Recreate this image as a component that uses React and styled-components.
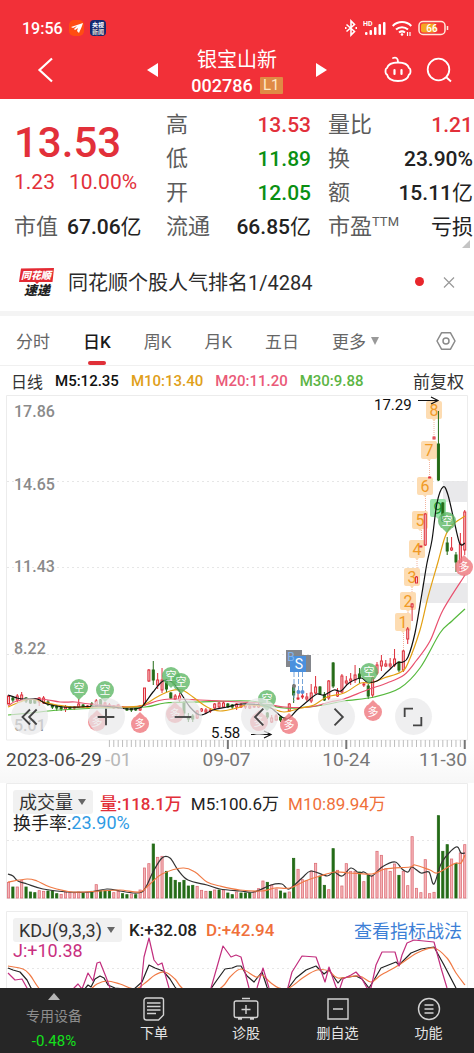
import React from 'react';
import styled, { createGlobalStyle } from 'styled-components';

const GlobalStyle = createGlobalStyle`
  * {
    box-sizing: border-box;
  }

  body {
    margin: 0;
    background: #fff;
    color: #222;
    font-family: Roboto, 'Noto Sans CJK SC', sans-serif;
  }

  button {
    padding: 0;
    border: 0;
    background: none;
    color: inherit;
    font-family: inherit;
    cursor: pointer;
  }

  svg {
    display: block;
  }
`;

const Page = styled.div`
  display: flex;
  flex-direction: column;
  min-height: 100vh;
`;

/* header */

const Header = styled.header`
  padding-top: 18px;
  height: 99px;
  background: #f23038;
  color: #fff;
`;

const StatusBar = styled.div`
  display: flex;
  align-items: center;
  height: 20px;
  padding: 0 25px 0 22px;
  gap: 6px;
`;

const Clock = styled.span`
  font-size: 16px;
  font-weight: 500;
`;

const StatusIcons = styled.div`
  display: flex;
  align-items: center;
  gap: 6px;
  margin-left: auto;
`;

const TitleBar = styled.div`
  display: grid;
  grid-template-columns: 1fr auto 1fr;
  align-items: center;
  height: 58px;
  margin-top: 3px;
  padding: 0 22px 0 36px;
`;

const TitleGroup = styled.div`
  display: flex;
  align-items: center;
  gap: 33px;
  margin-right: 14px;
`;

const TitleText = styled.div`
  display: flex;
  flex-direction: column;
  align-items: center;
  padding-top: 5px;
`;

const StockName = styled.h1`
  margin: 0;
  font-size: 20px;
  font-weight: 400;
  line-height: 26px;
`;

const StockCode = styled.div`
  display: flex;
  align-items: center;
  gap: 7px;
  font-size: 18px;
  font-weight: 500;
  line-height: 26px;
`;

const LevelBadge = styled.span`
  width: 23px;
  height: 17px;
  border-radius: 1px;
  background: #e08a45;
  color: #ffe9c8;
  font-size: 15px;
  font-weight: 400;
  line-height: 17px;
  text-align: center;
`;

const HeaderActions = styled.div`
  display: flex;
  justify-content: flex-end;
  gap: 14px;
`;

/* quote */

const Quote = styled.section`
  position: relative;
  display: grid;
  grid-template-columns: 135fr 145fr 145fr;
  grid-template-rows: repeat(4, 34px);
  column-gap: 17px;
  height: 151px;
  padding: 9px 1px 0 14px;
`;

const PriceBlock = styled.div`
  grid-row: 1 / 4;
  grid-column: 1;
  padding-top: 9px;
  color: #e2303a;
`;

const Price = styled.div`
  font-size: 42px;
  font-weight: 500;
  line-height: 52px;
`;

const Change = styled.div`
  display: flex;
  gap: 14px;
  font-size: 21px;
  line-height: 26px;
`;

const Stat = styled.div`
  display: flex;
  justify-content: ${(p) => (p.$col === 1 ? 'flex-start' : 'space-between')};
  gap: 9px;
  grid-column: ${(p) => p.$col};
  font-size: 21px;
  line-height: 34px;
  white-space: nowrap;
`;

const StatLabel = styled.span`
  color: #5c5c5c;
  font-size: 22px;
`;

const Ttm = styled.sup`
  font-size: 13px;
  line-height: 1;
`;

const StatValue = styled.span`
  color: ${(p) => p.$color || '#222'};
  font-weight: 500;
`;

const Unit = styled.span`
  font-weight: 400;
`;

const Corner = styled.span`
  position: absolute;
  right: 4px;
  bottom: 2px;
  border-left: 8px solid transparent;
  border-bottom: 8px solid #c4c4c4;
`;

/* news line */

const News = styled.section`
  display: flex;
  align-items: center;
  height: 66px;
  padding: 2px 18px 0 19px;
  border-bottom: 5px solid #f4f4f4;
`;

const NewsLink = styled.a`
  margin: 0 auto 0 13px;
  color: #2b2b2b;
  font-size: 20px;
  text-decoration: none;
`;

const Dot = styled.span`
  width: 9px;
  height: 9px;
  margin-right: 18px;
  border-radius: 50%;
  background: #e8262c;
`;

/* tabs */

const Tabs = styled.nav`
  display: flex;
  align-items: center;
  gap: 33px;
  height: 50px;
  padding: 0 18px 0 16px;
  border-bottom: 1px solid #f0f0f0;
`;

const Tab = styled.button`
  position: relative;
  display: flex;
  align-items: center;
  gap: 5px;
  height: 49px;
  color: ${(p) => (p.$active ? '#1a1a1a' : '#666')};
  font-size: 17px;
  font-weight: ${(p) => (p.$active ? 500 : 400)};

  &::after {
    content: '';
    display: ${(p) => (p.$active ? 'block' : 'none')};
    position: absolute;
    bottom: 0;
    left: 50%;
    width: 18px;
    height: 4px;
    margin-left: -9px;
    border-radius: 2px;
    background: #e03038;
  }
`;

const TabSettings = styled.button`
  margin-left: auto;
`;

const Caret = styled.span`
  border: 4px solid transparent;
  border-top: 8px solid #999;
  border-bottom: 0;
`;

/* charts */

const MaRow = styled.div`
  display: flex;
  gap: 12px;
  align-items: center;
  height: 29px;
  padding: 0 10px 0 11px;
  font-size: 15px;
  white-space: nowrap;
`;

const Period = styled.span`
  color: #333;
  font-size: 16px;
`;

const Ma = styled.span`
  color: ${(p) => p.$color};
  font-weight: ${(p) => (p.$plain ? 400 : 500)};
`;

const Adjust = styled.button`
  margin-left: auto;
  color: #333;
  font-size: 17px;
`;

const PriceChart = styled.section`
  position: relative;
`;

const ChartSvg = styled.svg`
  width: 100%;
  height: auto;
  font-family: Roboto, 'Noto Sans CJK SC', sans-serif;
`;

const ChartControls = styled.div`
  position: absolute;
  left: 0;
  right: 0;
  bottom: 14px;
  display: flex;
  justify-content: space-between;
  padding: 0 42px 0 11px;
`;

const RoundButton = styled.button`
  display: grid;
  place-items: center;
  width: 37px;
  height: 37px;
  border-radius: 50%;
  background: rgba(232, 232, 234, 0.7);
`;

const Dates = styled.div`
  display: grid;
  grid-template-columns: 197fr 120fr 97fr auto;
  height: 34px;
  padding: 0 7px 0 6px;
  background: linear-gradient(#fff, #f7f7f7);
  color: #777;
  font-size: 19px;
  line-height: 22px;
`;

const FirstDate = styled.span`
  color: #4a4a4a;
`;

const Faded = styled.span`
  margin-left: 3px;
  color: #b8b8b8;
`;

const Panel = styled.section`
  display: grid;
  margin-bottom: ${(p) => (p.$last ? 0 : 12)}px;

  & > * {
    grid-area: 1 / 1;
  }
`;

const Legend = styled.div`
  z-index: 1;
  padding: 7px 12px 0 13px;
  font-size: 17px;
  white-space: nowrap;
`;

const LegendRow = styled.div`
  display: flex;
  align-items: center;
  gap: ${(p) => p.$gap || 0}px;
  height: ${(p) => (p.$second ? 16 : 24)}px;
  font-size: ${(p) => (p.$second ? 18 : 17)}px;
`;

const Picker = styled.label`
  position: relative;
  display: flex;
  align-items: center;
  margin-right: -2px;
  border-radius: 3px;
  background: #f1f1f1;

  &::after {
    content: '';
    position: absolute;
    right: 7px;
    border: 4px solid transparent;
    border-top: 6px solid #666;
    border-bottom: 0;
    pointer-events: none;
  }
`;

const PickerSelect = styled.select`
  appearance: none;
  height: 24px;
  padding: 0 20px 0 6px;
  border: 0;
  background: none;
  color: #333;
  font-family: inherit;
  font-size: 18px;
`;

const TipLink = styled.a`
  margin-left: auto;
  color: #3d7fd6;
  font-size: 18px;
  text-decoration: none;
`;

/* bottom bar */

const BottomBar = styled.nav`
  display: grid;
  grid-template-columns: 108fr 92fr 92fr 91fr 91fr;
  flex: 1;
  min-height: 65px;
  background: #262626;
`;

const BarItem = styled.button`
  display: flex;
  flex-direction: column;
  align-items: center;
  padding-top: 9px;
  color: #e4e4e4;
  font-size: 14px;
  line-height: 24px;
`;

const DeviceItem = styled(BarItem)`
  padding-top: 5px;
  color: #8d8d8d;
`;

const Percent = styled.span`
  color: #14e01c;
  font-size: 15px;
  line-height: 26px;
`;

const UpArrow = styled.span`
  margin-bottom: 4px;
  border: 6px solid transparent;
  border-bottom: 7px solid #b5b5b5;
  border-top: 0;
`;

const STEP = 4.387;
const barX = (i) => 8.5 + i * STEP;

// r / g, high, body top, body bottom, low
const candles = `
r 301 301 309 309|g 301 303 305 307|r 299 301 305 307|r 297 300 305 306|g 302 303 306 308
g 303 304 308 309|g 304 305 308 309|r 302 303 307 311|r 301 303 308 309|g 305 307 309 311
g 309 310 312 314|g 310 311 313 316|g 310 312 314 316|r 310 312 314 317|g 311 312 314 315
r 311 312 313 315|r 304 309 312 313|g 309 310 312 313|r 310 311 312 313|g 307 309 312 314
r 304 306 311 312|g 304 305 310 311|r 307 308 311 312|r 308 310 312 313|r 310 311 313 314
r 309 310 313 314|r 311 312 313 314|g 312 313 315 316|g 312 313 315 317|g 312 313 315 316
r 310 312 315 316|r 293 293 310 311|r 274 275 286 287|g 266 275 285 290|r 278 285 290 294
r 273 285 295 298|g 284 286 294 297|g 297 298 303 304|r 299 301 304 305|r 298 301 305 308
g 306 308 318 322|g 318 322 324 327|g 319 321 324 327|r 315 316 323 324|r 313 314 316 317
r 313 315 317 319|r 313 315 316 318|r 308 309 313 315|r 307 308 312 313|r 306 308 312 313
g 308 309 312 313|g 309 310 312 314|r 308 309 312 315|r 308 310 312 313|r 310 311 312 314
r 310 311 313 314|r 309 311 312 313|r 308 310 312 313|r 308 309 311 312|g 317 318 322 324
r 320 323 327 328|r 319 321 325 326|g 321 322 325 327|g 322 323 325 326|r 308 309 316 317
g 289 292 300 308|r 295 303 304 305|r 296 301 302 304|r 298 302 304 306|r 289 298 306 308
r 281 292 298 299|g 291 292 299 300|g 297 300 305 306|r 285 286 303 305|g 267 268 291 293
r 293 297 301 302|r 279 281 297 298|r 281 286 288 291|r 278 284 286 290|r 270 280 285 288
g 273 279 283 288|r 287 289 290 292|g 289 291 301 304|r 281 283 300 303|r 267 270 278 280
r 260 266 271 276|r 265 269 271 272|r 263 269 271 273|r 254 264 270 272|g 266 267 275 277
r 255 256 275 277|r 232 234 244 249|r 208 209 212 226|r 181 182 188 188|r 151 151 152 152
r 118 119 150 151|r 82 82 83 83|r 42 42 44 44|g 16 49 85 86|g 107 108 126 127
g 142 148 156 160|r 142 153 155 156|g 157 160 167 177|r 138 149 168 177|r 115 117 155 160
`
  .trim()
  .split(/[|\n]/)
  .map((row) => {
    const [dir, ...v] = row.split(' ');
    return { dir, v: v.map(Number) };
  });

const volumes = `
47r 33g 33r 52r 33g 18g 16g 22r 20r 21g 21g 13g 11r 18r 16r 15r 18r 15g 16r 20g 40r 22g 22g 22g 16r
20r 13g 10g 12r 10g 24r 90r 103r 162g 122r 125r 80g 62g 53g 46g 53g 36g 38g 35r 23r 20r 20g 24r 24g
24r 15g 10g 18r 15g 15g 15g 20r 28r 51r 47g 39r 27r 21g 15g 18r 119g 86r 55r 52r 81r 104r 66g 38g
25r 148g 83r 36r 103r 80r 80r 78g 49r 68g 66r 140r 128r 88r 80r 102r 68g 80r 37r 184r 29r 16r 115r
13r 17r 247g 140g 160g 117r 103g 135r 160r
`
  .trim()
  .split(/\s+/)
  .map((s) => ({ h: parseInt(s, 10) / 3, dir: s.slice(-1) }));

const toPoints = (text) => text.trim().split(/\s+/).map((p) => p.split(',').map(Number));

// Catmull-Rom through the points
const curve = (text) => {
  const pts = toPoints(text);
  let d = `M${pts[0]}`;
  for (let i = 0; i < pts.length - 1; i += 1) {
    const a = pts[i - 1] || pts[i];
    const b = pts[i];
    const c = pts[i + 1];
    const e = pts[i + 2] || c;
    d += `C${b[0] + (c[0] - a[0]) / 6},${b[1] + (c[1] - a[1]) / 6} `;
    d += `${c[0] - (e[0] - b[0]) / 6},${c[1] - (e[1] - b[1]) / 6} ${c}`;
  }
  return d;
};

const priceLines = [
  {
    color: '#55b83c',
    points:
      '8,320 30,318 60,315 100,313 145,312 165,308 200,307 250,306 284,313 317,311 344,306 374,302 400,293 420,273 440,238 452,226 465,214',
  },
  {
    color: '#e9506e',
    points:
      '8,311 17,306 40,304 60,307 75,307 90,309 130,312 145,310 157,306 170,304 200,305 240,307 260,308 285,312 310,312 330,307 344,304 367,295 387,288 404,280 416,266 430,246 443,215 465,180',
  },
  {
    color: '#e3a012',
    points:
      '8,312 20,307 30,304 43,307 57,310 73,312 100,312 127,312 143,310 157,302 170,296 182,295 193,302 207,312 220,316 237,313 247,310 267,312 284,317 301,313 314,310 327,302 344,298 361,288 371,288 384,283 401,277 408,268 420,235 428,202 438,167 445,142 452,130 465,121',
  },
  {
    color: '#111',
    points:
      '8,300 17,303 23,304 37,304 47,309 63,312 80,312 97,311 113,312 128,314 140,313 145,308 153,297 163,286 172,287 180,297 190,312 200,320 213,315 227,312 241,309 261,310 271,313 286,324 297,315 309,305 317,299 324,300 334,295 341,296 349,288 361,283 367,287 377,286 387,277 397,268 403,267 408,262 415,238 422,198 427,168 432,145 437,108 443,92 448,100 455,130 460,149 465,148',
  },
];

const volumeLines = [
  {
    color: '#333',
    points:
      '8,91 13,93 18,98 27,101 43,106 67,109 90,109 107,106 120,108 133,110 142,109 147,102 153,89 162,75 170,75 178,87 188,97 207,102 220,106 240,108 254,109 271,102 282,101 289,106 302,95 311,88 327,93 334,89 342,93 351,85 359,90 364,89 372,93 382,84 395,79 402,86 408,89 412,84 421,90 429,89 434,101 442,79 456,64 461,70 465,70',
  },
  {
    color: '#f07a45',
    points:
      '8,99 27,96 37,98 50,104 73,109 100,108 120,107 140,109 150,101 162,91 183,85 195,89 207,99 220,103 240,107 262,108 275,105 290,105 305,98 320,93 335,89 350,90 372,91 385,86 410,84 415,82 430,87 437,90 450,83 456,80 461,80 465,72',
  },
];

const kLine =
  '8,57 13,59 20,61 27,69 31,77 45,92 70,90 83,80 88,74 91,76 95,68 100,65 104,67 108,74 115,77 133,79 142,71 149,54 155,57 163,60 170,68 175,76 190,95 210,79 217,69 225,58 232,57 237,55 241,55 247,65 254,71 262,61 267,76 272,88 287,79 296,67 306,59 316,55 324,63 329,59 338,72 342,67 356,65 362,68 369,77 374,69 381,57 396,51 399,54 411,42 421,38 434,36 444,54 456,77';
const dLine =
  '8,55 23,58 30,64 38,76 50,90 80,86 90,79 97,73 107,70 120,73 135,78 145,72 155,64 165,61 175,68 182,77 200,90 222,76 230,66 241,58 256,66 262,64 271,72 279,77 289,77 304,66 317,59 329,60 338,67 359,65 371,71 381,64 399,54 417,42 434,37 447,47 456,62 465,74';
const jLine =
  '8,62 15,69 22,68 27,77 40,100 70,90 74,77 78,73 82,78 88,62 93,70 97,52 100,51 106,66 110,77 118,95 135,95 141,76 144,46 149,27 154,49 158,54 162,52 169,77 180,104 200,104 211,77 223,35 231,46 236,44 241,46 249,77 253,84 257,77 263,57 269,77 278,100 287,80 292,61 302,45 316,46 325,71 329,56 336,76 339,80 343,68 351,64 356,61 362,68 367,77 371,77 376,54 382,41 395,41 399,55 402,44 407,32 414,29 434,31 441,57 447,77';

const signals = [
  ['空', 79, 293],
  ['空', 105, 295],
  ['空', 171, 281],
  ['空', 181, 287],
  ['空', 267, 304],
  ['空', 369, 277],
  ['空', 447, 126],
  ['多', 97, 327],
  ['多', 140, 329],
  ['多', 175, 319],
  ['多', 259, 327],
  ['多', 289, 330],
  ['多', 373, 317],
  ['多', 464, 172],
];

const counts = [
  [1, 403, 228],
  [2, 408, 207],
  [3, 412, 183],
  [4, 417, 155],
  [5, 420, 126],
  [6, 425, 92],
  [7, 429, 56],
  [8, 434, 16],
  [9, 438, 114],
];

const axisLabels = [
  ['17.86', 16],
  ['14.65', 89],
  ['11.43', 171],
  ['8.22', 253],
  ['5.01', 330],
];

const stats = [
  { col: 2, label: '高', value: '13.53', color: '#e2303a' },
  { col: 3, label: '量比', value: '1.21', color: '#e2303a' },
  { col: 2, label: '低', value: '11.89', color: '#0a8f12' },
  { col: 3, label: '换', value: '23.90%' },
  { col: 2, label: '开', value: '12.05', color: '#0a8f12' },
  { col: 3, label: '额', value: '15.11', unit: '亿' },
  { col: 1, label: '市值', value: '67.06', unit: '亿' },
  { col: 2, label: '流通', value: '66.85', unit: '亿' },
  { col: 3, label: '市盈', ttm: true, unit: '亏损' },
];

const tabs = ['分时', '日K', '周K', '月K', '五日', '更多'];

const controls = [
  ['最早', 'M20 3 11 12l9 9M12 3 3 12l9 9'],
  ['放大', 'M12 2v20M2 12h20'],
  ['缩小', 'M2 12h20'],
  ['向左', 'M16 2 6 12l10 10'],
  ['向右', 'M9 2l10 10L9 22'],
  ['全屏', 'M2 12V2h10M22 12v10H12'],
];

const StatusBadges = () => (
  <svg width="38" height="18" viewBox="0 0 38 18">
    <rect x="0" y="1" width="15" height="16" rx="5" fill="#ff4d12" />
    <path d="M2 8c4-1 8-3 12-4-1 4-3 7-4 10l-2-2 1-3-3 2-1-1 3-3-4 2z" fill="#fff" />
    <rect x="21" y="1" width="16" height="16" rx="4" fill="#132a70" />
    <text x="29" y="8" fontSize="6" fontWeight="700" fill="#fff" textAnchor="middle">
      央视
    </text>
    <text x="29" y="15" fontSize="6" fontWeight="700" fill="#e8dccf" textAnchor="middle">
      新闻
    </text>
  </svg>
);

const Bluetooth = () => (
  <svg width="12" height="18" viewBox="0 0 12 18" fill="none" stroke="#fff" strokeWidth="1.600">
    <path d="M1.500 5.500 9.500 12.500 6 16V2l3.500 3.500-8 7" />
    <path d="M0 9h1.500M10.500 9H12" strokeWidth="2" />
  </svg>
);

const Signal = () => (
  <svg width="23" height="18" viewBox="0 0 23 18" fill="#fff">
    <text x="0" y="7" fontSize="7" fontWeight="700">
      HD
    </text>
    <rect x="2" y="13" width="2.500" height="3" rx="1" />
    <rect x="6.500" y="11" width="2.500" height="5" rx="1" />
    <rect x="11" y="8" width="2.500" height="8" rx="1" />
    <rect x="15.500" y="5" width="2.500" height="11" rx="1" />
    <rect x="20" y="3" width="2.500" height="13" rx="1" />
  </svg>
);

const Wifi = () => (
  <svg width="20" height="18" viewBox="0 0 20 18" fill="none" stroke="#fff" strokeWidth="2">
    <path d="M.7 7a13 13 0 0 1 18.600 0M4 10.500a9 9 0 0 1 12 0M7 13.500a5 5 0 0 1 6 0" />
    <circle cx="10" cy="15.500" r="1.300" fill="#fff" stroke="none" />
    <path d="M15.500 13v4M18 13v4" strokeWidth="1.200" />
  </svg>
);

const Battery = () => (
  <svg width="31" height="16" viewBox="0 0 31 16">
    <rect x="1" y="1.500" width="26" height="13" rx="4" fill="none" stroke="#ffe9dc" strokeWidth="1.500" />
    <rect x="3" y="3.500" width="15" height="9" rx="2" fill="#f5a623" />
    <path d="M29.500 6v4" stroke="#ffe9dc" strokeWidth="1.500" />
    <text x="14" y="11.500" fontSize="10" fontWeight="500" fill="#fff" textAnchor="middle">
      66
    </text>
  </svg>
);

const Robot = () => (
  <svg width="28" height="28" viewBox="0 0 28 28" fill="none" stroke="#fff" strokeWidth="1.800" strokeLinecap="round">
    <path d="M9 2c3-1 5 0 5 4" />
    <path d="M14 6.500c-7 0-10 2-11 5.500-2 .5-2 6 0 6.500 1 4.500 4 6.500 11 6.500s10-2 11-6.500c2-.5 2-6 0-6.500-1-3.500-4-5.500-11-5.500z" />
    <path d="M10.500 14v4M17.500 14v4" strokeWidth="2.200" />
  </svg>
);

const NewsLogo = () => (
  <svg width="36" height="30" viewBox="0 0 36 30" role="img" aria-label="同花顺速递">
    <path d="M2 1.500 35 1 33.500 15H20l-2 2-2-2H0z" fill="#e42a33" />
    <g fontStyle="italic" fontWeight="900" textAnchor="middle">
      <text x="17" y="12" fontSize="10" fill="#fff">
        同花顺
      </text>
      <text x="18" y="28" fontSize="13" fill="#222">
        速递
      </text>
    </g>
  </svg>
);

const barIcons = [
  {
    label: '下单',
    icon: <path d="M4.500 1h15a2 2 0 0 1 2 2v15l-5 5h-12A2.500 2.500 0 0 1 2 20.500v-17A2.500 2.500 0 0 1 4.500 1zM5 6h13.500M5 9.500h13.500M5 13h13.500M5 16.500h9" />,
  },
  {
    label: '诊股',
    icon: <path d="M2 4h20a1.800 1.800 0 0 1 1.800 1.800v13A1.800 1.800 0 0 1 22 20.500H2a1.800 1.800 0 0 1-1.800-1.700v-13A1.800 1.800 0 0 1 2 4zM8 1.500h8M12 8v9M7.500 12.500h9M4 22h4M16 22h4" />,
  },
  { label: '删自选', icon: <path d="M2 2h20v20H2zM7 12h10" /> },
  {
    label: '功能',
    icon: (
      <>
        <circle cx="12" cy="12" r="10.500" />
        <path d="M7.500 8h9M7.500 12h9M7.500 16h9" />
      </>
    ),
  },
];

const Lines = ({ lines }) =>
  lines.map((line) => (
    <path key={line.color} d={curve(line.points)} fill="none" stroke={line.color} strokeWidth="1.200" />
  ));

const KLine = () => (
  <ChartSvg viewBox="0 0 474 354">
    <g fill="#e9e9eb">
      <rect x="443" y="86" width="24" height="21" />
      <rect x="417" y="178" width="50" height="3" />
      <rect x="422" y="188" width="45" height="20" />
    </g>
    <path d="M6.500 345V.5h461V345z" fill="none" stroke="#ececec" />
    <path d="M7 86.500h460M7 172.500h460M7 259.500h460" stroke="#e6e6e6" strokeDasharray="2 3" />
    <g fill="#8a8a8a" fontSize="16" fontWeight="500">
      {axisLabels.map(([label, y]) => (
        <text key={label} x="14" y={y + 6}>
          {label}
        </text>
      ))}
    </g>

    <path
      d="M403.500 238v18M408 215v20M412 192v16M417 164v17M421.500 135v17M425.500 101v18M429.500 65v17M434 25v18"
      stroke="#f3b5a0"
      strokeDasharray="1 1"
    />
    {counts.map(([n, x, y]) => (
      <g key={n}>
        <path
          d={`M${x - 6} ${y - 10}h12a2 2 0 0 1 2 2v14a2 2 0 0 1-2 2h-4l-2 2-2-2h-4a2 2 0 0 1-2-2v-14a2 2 0 0 1 2-2z`}
          fill={n === 9 ? '#98e3a8' : '#fddcb2'}
        />
        <text x={x} y={y + 5} fontSize="16" textAnchor="middle" fill={n === 9 ? '#14982f' : '#f09a26'}>
          {n}
        </text>
      </g>
    ))}

    {candles.map(({ dir, v }, i) => {
      const color = dir === 'r' ? '#dd2f3a' : '#246b17';
      return (
        <g key={i} stroke={color}>
          <path d={`M${barX(i)} ${v[0]}V${v[1]}M${barX(i)} ${v[2]}V${v[3]}`} />
          <rect x={barX(i) - 1} y={v[1]} width="2" height={v[2] - v[1]} fill={dir === 'r' ? '#f8c6ca' : color} />
        </g>
      );
    })}

    <Lines lines={priceLines} />

    {signals.map(([mark, x, y]) => (
      <g key={`${x}-${y}`} opacity="0.8">
        <circle cx={x} cy={y} r="9" fill={mark === '空' ? '#5fb867' : '#f0787e'} />
        <path
          d={mark === '空' ? `M${x - 4} ${y + 8}h8l-4 4z` : `M${x - 4} ${y - 8}h8l-4-4z`}
          fill={mark === '空' ? '#5fb867' : '#f0787e'}
        />
        <text x={x} y={y + 4} fontSize="11" textAnchor="middle" fill="#fff">
          {mark}
        </text>
      </g>
    ))}

    <path d="M294 277v29M298.500 277v20M302.500 277v20" stroke="#74a3d8" strokeDasharray="5 2" />
    <circle cx="298.500" cy="297" r="2" fill="#5a94d6" />
    <circle cx="302.500" cy="297" r="2" fill="#5a94d6" />
    <circle cx="294" cy="291" r="2" fill="#777" />
    <rect x="286" y="255" width="16" height="17" fill="#83868c" />
    <rect x="297" y="260" width="14" height="17" fill="#83868c" />
    <rect x="290" y="261" width="16" height="16" fill="#4a90de" />
    <text x="291" y="266" fontSize="12" textAnchor="middle" fill="#7db4f0">
      B
    </text>
    <text x="299" y="274" fontSize="14" textAnchor="middle" fill="#fff">
      S
    </text>

    <g fill="#111" fontSize="15">
      <text x="374" y="15">
        17.29
      </text>
      <text x="211" y="343">
        5.58
      </text>
    </g>
    <path d="M418 5.500h20M431 2l7 3.500-7 3.500M251 339.500h20M264 336l7 3.500-7 3.500" fill="none" stroke="#111" strokeWidth="1.200" />

    {candles.slice(23).map((c, i) => {
      const x = barX(i + 23);
      const major = [50, 77, 104].includes(i + 23);
      return (
        <path key={x} d={`M${x} 345v${major ? 9 : 7}`} stroke={major ? '#777' : '#bdbdbd'} strokeWidth={major ? 2 : 1} />
      );
    })}
  </ChartSvg>
);

const VolumeChart = () => (
  <ChartSvg viewBox="0 0 474 116">
    <path d="M6.500.5h461v115H6.500z" fill="none" stroke="#ececec" />
    <path d="M7 57.500h460" stroke="#e6e6e6" strokeDasharray="2 3" />
    {volumes.map(({ h, dir }, i) => (
      <rect
        key={i}
        x={barX(i) - 1.1}
        y={115 - h}
        width="2.200"
        height={h}
        fill={dir === 'r' ? '#f5b4b8' : '#246b17'}
        stroke={dir === 'r' ? '#dd7078' : '#246b17'}
        strokeWidth="0.800"
      />
    ))}
    <Lines lines={volumeLines} />
  </ChartSvg>
);

const KdjChart = () => (
  <ChartSvg viewBox="0 0 474 77">
    <path d="M6.500 78V.5h461V78" fill="none" stroke="#ececec" />
    <path d="M7 57.500h460" stroke="#e6e6e6" strokeDasharray="2 3" />
    <g fill="none" strokeWidth="1.200" strokeLinejoin="round">
      <polyline points={kLine} stroke="#222" />
      <path d={curve(dLine)} stroke="#f07a45" />
      <polyline points={jLine} stroke="#c22e7e" />
    </g>
  </ChartSvg>
);

const App = () => (
  <>
    <GlobalStyle />
    <Page>
      <Header>
        <StatusBar>
          <Clock>19:56</Clock>
          <StatusBadges />
          <StatusIcons>
            <Bluetooth />
            <Signal />
            <Wifi />
            <Battery />
          </StatusIcons>
        </StatusBar>
        <TitleBar>
          <button type="button" aria-label="返回">
            <svg width="20" height="26" viewBox="0 0 20 26" fill="none" stroke="#fff" strokeWidth="2.200">
              <path d="M16 1.500 3.500 13 16 24.500" />
            </svg>
          </button>
          <TitleGroup>
            <button type="button" aria-label="上一只">
              <svg width="11" height="14" viewBox="0 0 11 14" fill="#fff">
                <path d="M11 0v14L0 7z" />
              </svg>
            </button>
            <TitleText>
              <StockName>银宝山新</StockName>
              <StockCode>
                002786
                <LevelBadge>L1</LevelBadge>
              </StockCode>
            </TitleText>
            <button type="button" aria-label="下一只">
              <svg width="11" height="14" viewBox="0 0 11 14" fill="#fff">
                <path d="M0 0v14l11-7z" />
              </svg>
            </button>
          </TitleGroup>
          <HeaderActions>
            <button type="button" aria-label="助手">
              <Robot />
            </button>
            <button type="button" aria-label="搜索">
              <svg width="26" height="26" viewBox="0 0 26 26" fill="none" stroke="#fff" strokeWidth="1.800">
                <circle cx="12.500" cy="12.500" r="10.800" />
                <path d="M20 20l5 4.500" />
              </svg>
            </button>
          </HeaderActions>
        </TitleBar>
      </Header>

      <Quote>
        <PriceBlock>
          <Price>13.53</Price>
          <Change>
            <span>1.23</span>
            <span>10.00%</span>
          </Change>
        </PriceBlock>
        {stats.map((s) => (
          <Stat key={s.label} $col={s.col}>
            <StatLabel>
              {s.label}
              {s.ttm && <Ttm>TTM</Ttm>}
            </StatLabel>
            <StatValue $color={s.color}>
              {s.value}
              {s.unit && <Unit>{s.unit}</Unit>}
            </StatValue>
          </Stat>
        ))}
        <Corner />
      </Quote>

      <News>
        <NewsLogo />
        <NewsLink href="#rank">同花顺个股人气排名1/4284</NewsLink>
        <Dot />
        <button type="button" aria-label="关闭">
          <svg width="14" height="14" viewBox="0 0 14 14" stroke="#999" strokeWidth="1.200">
            <path d="M2 2.500l10 10M12 2.500l-10 10" />
          </svg>
        </button>
      </News>

      <Tabs>
        {tabs.map((tab) => (
          <Tab key={tab} type="button" $active={tab === '日K'}>
            {tab}
            {tab === '更多' && <Caret />}
          </Tab>
        ))}
        <TabSettings type="button" aria-label="设置">
          <svg width="20" height="20" viewBox="0 0 20 20" fill="none" stroke="#8a8a8a" strokeWidth="1.500">
            <path d="M5.500 1.800h9L19 10l-4.500 8.200h-9L1 10z" strokeLinejoin="round" />
            <circle cx="10" cy="10" r="3" />
          </svg>
        </TabSettings>
      </Tabs>

      <MaRow>
        <Period>日线</Period>
        <Ma $color="#111">M5:12.35</Ma>
        <Ma $color="#e0a01a">M10:13.40</Ma>
        <Ma $color="#ea5a78">M20:11.20</Ma>
        <Ma $color="#5cb544">M30:9.88</Ma>
        <Adjust type="button">前复权</Adjust>
      </MaRow>

      <PriceChart>
        <KLine />
        <ChartControls>
          {controls.map(([label, d]) => (
            <RoundButton key={label} type="button" aria-label={label}>
              <svg width="20" height="20" viewBox="0 0 24 24" fill="none" stroke="#444" strokeWidth="2.200">
                <path d={d} />
              </svg>
            </RoundButton>
          ))}
        </ChartControls>
      </PriceChart>
      <Dates>
        <span>
          <FirstDate>2023-06-29</FirstDate>
          <Faded>-01</Faded>
        </span>
        <span>09-07</span>
        <span>10-24</span>
        <span>11-30</span>
      </Dates>

      <Panel>
        <VolumeChart />
        <Legend>
          <LegendRow $gap={9}>
            <Picker>
              <PickerSelect aria-label="指标">
                <option>成交量</option>
              </PickerSelect>
            </Picker>
            <Ma $color="#e2303a">量:118.1万</Ma>
            <Ma $color="#222" $plain>
              M5:100.6万
            </Ma>
            <Ma $color="#f0703a" $plain>
              M10:89.94万
            </Ma>
          </LegendRow>
          <LegendRow $second>
            换手率:
            <Ma $color="#2f9be4" $plain>
              23.90%
            </Ma>
          </LegendRow>
        </Legend>
      </Panel>

      <Panel $last>
        <KdjChart />
        <Legend>
          <LegendRow $gap={9}>
            <Picker>
              <PickerSelect aria-label="副图指标">
                <option>KDJ(9,3,3)</option>
              </PickerSelect>
            </Picker>
            <Ma $color="#222">K:+32.08</Ma>
            <Ma $color="#f0703a">D:+42.94</Ma>
            <TipLink href="#kdj">查看指标战法</TipLink>
          </LegendRow>
          <LegendRow $second>
            <Ma $color="#c9307f" $plain>
              J:+10.38
            </Ma>
          </LegendRow>
        </Legend>
      </Panel>

      <BottomBar>
        <DeviceItem type="button">
          <UpArrow />
          专用设备
          <Percent>-0.48%</Percent>
        </DeviceItem>
        {barIcons.map(({ label, icon }) => (
          <BarItem key={label} type="button">
            <svg width="24" height="24" viewBox="0 0 24 24" fill="none" stroke="#d2d2d2" strokeWidth="1.400" overflow="visible">
              {icon}
            </svg>
            {label}
          </BarItem>
        ))}
      </BottomBar>
    </Page>
  </>
);

export default App;
